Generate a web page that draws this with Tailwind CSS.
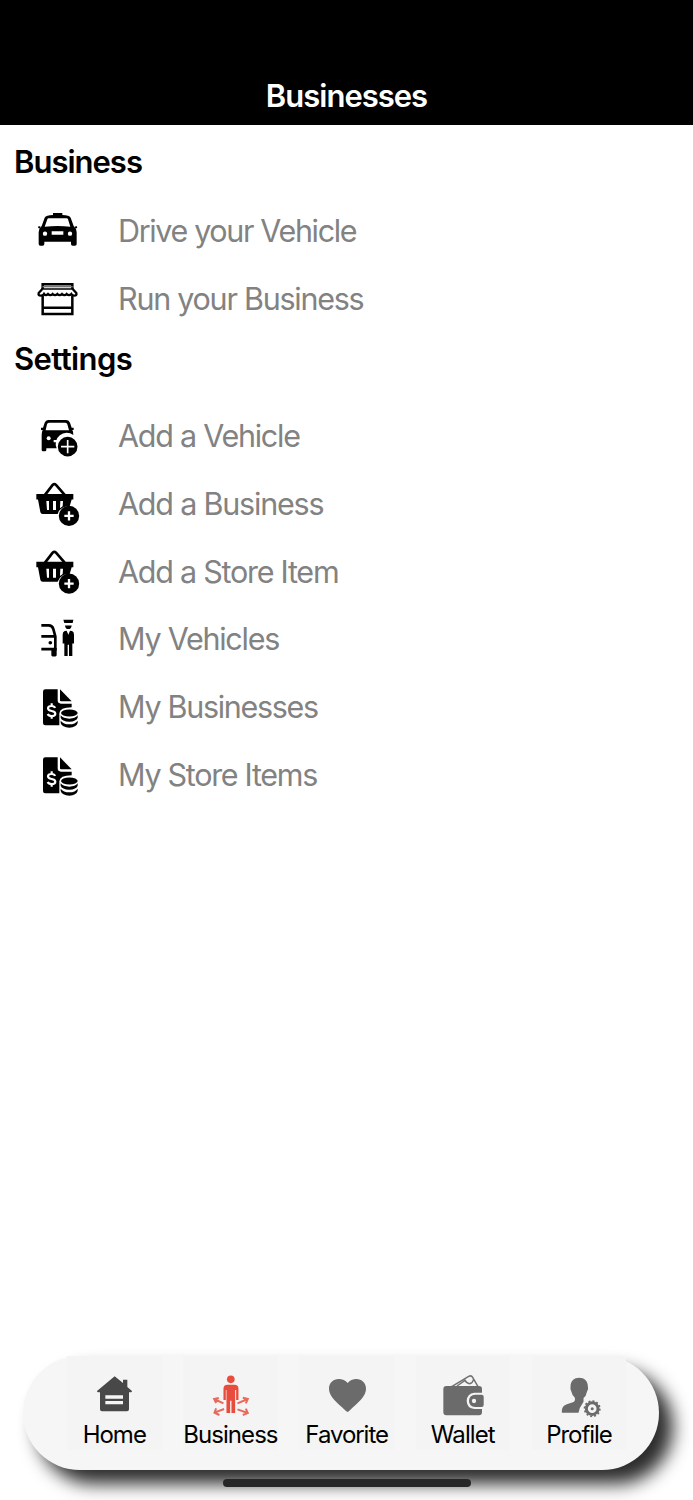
<!DOCTYPE html>
<html lang="en">
<head>
<meta charset="utf-8">
<title>Businesses</title>
<script src="https://cdn.jsdelivr.net/npm/@tailwindcss/browser@4"></script>
</head>
<body class="bg-white font-['Inter','Liberation_Sans',sans-serif]">
<svg class="hidden">
  <defs>
    <g id="basket">
      <path d="M75 269L98 239Q103 234 108 239L134 269" fill="none" stroke="#000" stroke-width="8"/>
      <path d="M49 266H160V283H155L149 303A33 33 0 0 0 113 326H68Q62 326 61 320L54 283H49Z"/>
      <path d="M79 287h8v27h-6zM99 287h9v27h-9zM121 287h8l-1 16-8 6z" fill="#fff"/>
      <circle cx="147" cy="332" r="30.500"/>
      <path d="M147 318V346M133 332H161" stroke="#fff" stroke-width="7"/>
    </g>
    <g id="invoice">
      <path d="M76 43H113V76Q113 86 123 86H155V97Q119 97 118 115V151H76Q69 151 69 144V50Q69 43 76 43Z"/>
      <path d="M120 43L155 79H123Q120 79 120 76Z"/>
      <path d="M105 99Q103 93 95 93Q84 93 84 100Q84 106 95 108Q106 110 106 116Q106 123 95 123Q86 123 83 117M95 85V94M95 123V131" fill="none" stroke="#fff" stroke-width="6.500"/>
      <ellipse cx="148" cy="114" rx="25" ry="10.500"/>
      <path d="M122 121Q130 131 148 131Q166 131 173 121V128Q169 139 148 140Q126 139 122 128ZM122 137Q130 148 148 148Q166 148 173 137V144Q169 157 148 158Q126 157 122 144Z"/>
    </g>
  </defs>
</svg>
<div class="flex h-[1500px] w-[693px] flex-col overflow-hidden">
  <header class="flex h-[124.500px] shrink-0 items-end justify-center bg-black pb-[9px]">
    <h1 class="text-[31px] leading-10 font-semibold tracking-[-1px] text-white">Businesses</h1>
  </header>

  <main class="flex grow flex-col">
    <h2 class="mt-[17.500px] pl-[14px] text-[31px] leading-10 font-semibold tracking-[-1px]">Business</h2>
    <ul class="mt-[15px] pl-5 text-[30.500px] text-[#828282]">
      <li class="flex h-[68px] items-center gap-[18px]">
        <svg class="h-[68px] w-20 text-black" viewBox="60 6 240 204">
          <path d="M159 60V54H187V60Q208 60 212 68L221 93Q230 101 230 112V147Q230 152 225 152H218Q213 152 213 147V140H133V147Q133 152 128 152H121Q116 152 116 147V112Q116 101 125 93L134 68Q138 60 159 60Z"/>
          <path d="M146 70H200Q203 70 204 73L211 95Q173 91 134 95L142 73Q143 70 146 70ZM155 109H190V119H155Z" fill="#fff"/>
          <circle cx="135" cy="116" r="6.500" fill="#fff"/><circle cx="210" cy="116" r="6.500" fill="#fff"/>
          <path d="M121 98L115 96M225 98L231 96" stroke="#000" stroke-width="6"/>
        </svg>
        <span class="tracking-[-1.350px]">Drive your Vehicle</span>
      </li>
      <li class="flex h-[68px] items-center gap-[18px]">
        <svg class="h-[68px] w-20" viewBox="60 210 240 204" fill="none" stroke="#000" stroke-width="7.500">
          <path d="M128 302V357H217V302M128 338H217M128 282V268H217V282"/>
          <path d="M127 275H218" stroke="#777" stroke-width="4"/>
          <path d="M127 282L116 294Q114 302 122 302Q129 302 132 297Q137 304 144 297Q151 304 158 297Q165 304 172 297Q179 304 186 297Q193 304 200 297Q207 304 214 297Q217 302 223 302Q231 302 229 294L218 282" stroke-width="7"/>
          <path d="M124 282H221" stroke-width="5"/>
        </svg>
        <span class="tracking-[-1.250px]">Run your Business</span>
      </li>
    </ul>

    <h2 class="mt-[6px] pl-[14px] text-[31px] leading-10 font-semibold tracking-[-0.600px]">Settings</h2>
    <ul class="mt-[23px] pl-5 text-[30.500px] text-[#828282]">
      <li class="flex h-[67.750px] items-center gap-[18px]">
        <svg class="h-[67.750px] w-20" viewBox="0 -9 240 203.250">
          <path d="M84 45H139Q147 45 150 53L155 68H161V75H157Q160 80 160 90A33 33 0 0 0 110 130H79V135Q79 139 75 139H69Q65 139 65 135V90Q65 81 68 75H63V68H69L74 53Q77 45 84 45Z"/>
          <path d="M87 53H136Q141 53 142 58L147 76H77L81 58Q82 53 87 53ZM101 105H112L109 112H101Z" fill="#fff"/>
          <circle cx="86" cy="100" r="6" fill="#fff"/>
          <circle cx="143" cy="125" r="29.500"/>
          <path d="M143 105V145M123 125H163" stroke="#fff" stroke-width="5"/>
        </svg>
        <span class="tracking-[-1.250px]">Add a Vehicle</span>
      </li>
      <li class="flex h-[67.750px] items-center gap-[18px]">
        <svg class="h-[67.750px] w-20" viewBox="0 194.250 240 203.250"><use href="#basket"/></svg>
        <span class="tracking-[-1.200px]">Add a Business</span>
      </li>
      <li class="flex h-[67.750px] items-center gap-[18px]">
        <svg class="h-[67.750px] w-20" viewBox="0 195 240 203.250"><use href="#basket"/></svg>
        <span class="tracking-[-1.250px]">Add a Store Item</span>
      </li>
      <li class="flex h-[67.750px] items-center gap-[18px]">
        <svg class="h-[67.750px] w-20" viewBox="0 195.750 240 203.250">
          <path d="M64 257H86Q97 257 100 268L106 290V328H64M64 290H105" fill="none" stroke="#000" stroke-width="8"/>
          <path d="M94 325H110V346Q110 350 106 350H98Q94 350 94 346Z"/>
          <circle cx="91" cy="309" r="5.500"/>
          <path d="M130 240H160L158 250H133ZM135 257H155Q154 268 145 268Q136 268 135 257ZM134 274L140 273L145 285L150 273L156 274Q162 276 162 284V311H157V349H147V315H143V349H133V311H128V284Q128 276 134 274Z"/>
        </svg>
        <span class="tracking-[-1.250px]">My Vehicles</span>
      </li>
      <li class="flex h-[67.750px] items-center gap-[18px]">
        <svg class="h-[67.750px] w-20" viewBox="0 -6 240 203.250"><use href="#invoice"/></svg>
        <span class="tracking-[-1.300px]">My Businesses</span>
      </li>
      <li class="flex h-[67.750px] items-center gap-[18px]">
        <svg class="h-[67.750px] w-20" viewBox="0 -6 240 203.250"><use href="#invoice"/></svg>
        <span class="tracking-[-1.300px]">My Store Items</span>
      </li>
    </ul>
  </main>

  <nav class="mb-[9px] ml-[23px] flex h-[114px] w-[635.500px] shrink-0 gap-[21.700px] rounded-full bg-[#f6f6f6] pl-[44px] text-2xl leading-7 text-black shadow-[14px_14px_18px_#2c2c2c]">
    <a class="flex h-[94px] w-[94.500px] shrink-0 flex-col items-center bg-[#f4f4f4]">
      <svg class="h-[65px] w-[94px] shrink-0" viewBox="201 45 282 195">
        <path d="M344 106L369 126V116H382V138L396 150Q396 154 392 154H387V205Q387 211 381 211H306Q300 211 300 205V154H295Q291 154 291 150Z" fill="#484848"/>
        <path d="M316 163H369V173H316ZM316 180H369V190H316Z" fill="#f4f4f4"/>
      </svg>
      <span class="whitespace-nowrap tracking-[-1px]">Home</span>
    </a>
    <a class="flex h-[94px] w-[94.500px] shrink-0 flex-col items-center bg-[#f4f4f4]">
      <svg class="h-[65px] w-[94px] shrink-0" viewBox="39.600 45 282 195">
        <g fill="#e84c3d">
          <circle cx="183" cy="115" r="11.500"/>
          <path d="M173 131H194Q206 131 206 143V177H199V147H196V216H185V179H181V216H170V147H168V177H161V143Q161 131 173 131Z"/>
        </g>
        <path d="M161 187L133 174M147 171L133 174L139 186M163 204L134 215M139 202L134 215L149 222M203 187L234 174M219 170L234 174L228 187M203 205L234 216M228 203L234 216L219 222" fill="none" stroke="#e86a5c" stroke-width="6"/>
      </svg>
      <span class="whitespace-nowrap tracking-[-0.950px]">Business</span>
    </a>
    <a class="flex h-[94px] w-[94.500px] shrink-0 flex-col items-center bg-[#f4f4f4]">
      <svg class="h-[65px] w-[94px] shrink-0" viewBox="28 45 282 195">
        <path d="M171 213Q166 211 154 199C130 177 115 162 115 143C115 126 128 114 144 114Q161 114 171 126Q181 114 197 114C213 114 226 126 226 143C226 162 211 177 187 199Q175 211 171 213Z" fill="#6b6b6b"/>
      </svg>
      <span class="whitespace-nowrap tracking-[-1.050px]">Favorite</span>
    </a>
    <a class="flex h-[94px] w-[94.500px] shrink-0 flex-col items-center bg-[#f4f4f4]">
      <svg class="h-[65px] w-[94px] shrink-0" viewBox="377 45 282 195">
        <path d="M484 137L535 106Q543 102 547 109L563 137M500 135L524 118Q527 126 537 128Q547 127 549 116" fill="none" stroke="#707070" stroke-width="4.500"/>
        <path d="M468 135H566Q575 135 575 144V155H552Q530 157 529 180Q530 202 552 204H575V214Q575 223 566 223H468Q459 223 459 214V144Q459 135 468 135Z" fill="#6b6b6b"/>
        <path d="M555 161H574Q580 161 580 167V192Q580 198 574 198H555Q536 197 536 180Q536 162 555 161Z" fill="#6b6b6b"/>
        <circle cx="551" cy="180" r="6.500" fill="#f4f4f4"/>
      </svg>
      <span class="whitespace-nowrap tracking-[-0.900px]">Wallet</span>
    </a>
    <a class="flex h-[94px] w-[94.500px] shrink-0 flex-col items-center rounded-tr-[4px] bg-[#f4f4f4]">
      <svg class="h-[65px] w-[94px] shrink-0" viewBox="35.400 45 282 195">
        <path d="M177 110C192 110 203 120 203 136Q206 146 200 153Q198 165 190 171V182L186 189Q176 202 175 215H125V208Q126 195 140 190L158 184Q166 181 164 170Q156 164 154 153Q149 146 151 136C151 120 162 110 177 110Z" fill="#6b6b6b"/>
        <circle cx="216" cy="203" r="17.500" fill="none" stroke="#6b6b6b" stroke-width="9"/>
        <circle cx="216" cy="203" r="23" fill="none" stroke="#6b6b6b" stroke-width="5" stroke-dasharray="6 6.040"/>
        <circle cx="216" cy="203" r="4.500" fill="#6b6b6b"/>
      </svg>
      <span class="whitespace-nowrap tracking-[-1.050px]">Profile</span>
    </a>
  </nav>
  <div class="z-10 mb-[13px] ml-[223px] h-[8.500px] w-[247.500px] shrink-0 rounded-full bg-[#272727]"></div>
</div>
</body>
</html>
